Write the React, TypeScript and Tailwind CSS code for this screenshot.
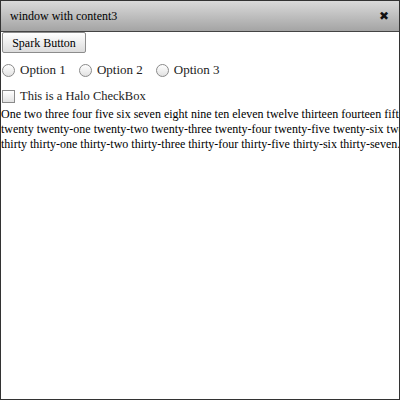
import React from "react";

const serif = { fontFamily: '"Liberation Serif", "Times New Roman", serif' };

function Radio({ label }: { label: string }) {
  return (
    <div className="flex items-center">
      <span className="w-[13px] h-[13px] rounded-full border border-[#8a8a8a] bg-gradient-to-b from-[#ffffff] to-[#e2e2e2] shrink-0" />
      <span className="ml-[5px] text-[13px] text-[#222]">{label}</span>
    </div>
  );
}

export default function App() {
  return (
    <div className="w-[400px] h-[400px] border border-[#333] bg-white overflow-hidden flex flex-col text-black" style={serif}>
      <div className="h-[31px] shrink-0 border-b border-[#444] bg-gradient-to-b from-[#dadada] to-[#a4a4a4] flex items-center justify-between pl-[9px] pr-[10px]">
        <span className="text-[12px] leading-none">window with content3</span>
        <span className="text-[12px] font-bold leading-none text-[#111]" style={{ fontFamily: '"DejaVu Sans", sans-serif' }}>✖</span>
      </div>
      <div className="pl-[1px] flex flex-col">
        <button className="block h-[21px] w-[84px] border border-[#8c8c8c] rounded-[2px] bg-gradient-to-b from-[#ffffff] to-[#dcdcdc] text-[12px] leading-none" style={serif}>
          Spark Button
        </button>
        <div className="flex items-center gap-[13px] mt-[9px] h-[16px]">
          <Radio label="Option 1" />
          <Radio label="Option 2" />
          <Radio label="Option 3" />
        </div>
        <div className="flex items-center mt-[10px] h-[16px]">
          <span className="w-[13px] h-[13px] border border-[#8a8a8a] bg-gradient-to-b from-[#ffffff] to-[#e2e2e2] shrink-0" />
          <span className="ml-[5px] text-[12.5px] text-[#222]">This is a Halo CheckBox</span>
        </div>
        <div className="mt-[3px] text-[12px] leading-[15px] whitespace-nowrap -ml-[1px]">
          <div>One two three four five six seven eight nine ten eleven twelve thirteen fourteen fifteen sixteen seventeen eighteen nineteen</div>
          <div>twenty twenty-one twenty-two twenty-three twenty-four twenty-five twenty-six twenty-seven twenty-eight twenty-nine</div>
          <div>thirty thirty-one thirty-two thirty-three thirty-four thirty-five thirty-six thirty-seven.</div>
        </div>
      </div>
    </div>
  );
}
